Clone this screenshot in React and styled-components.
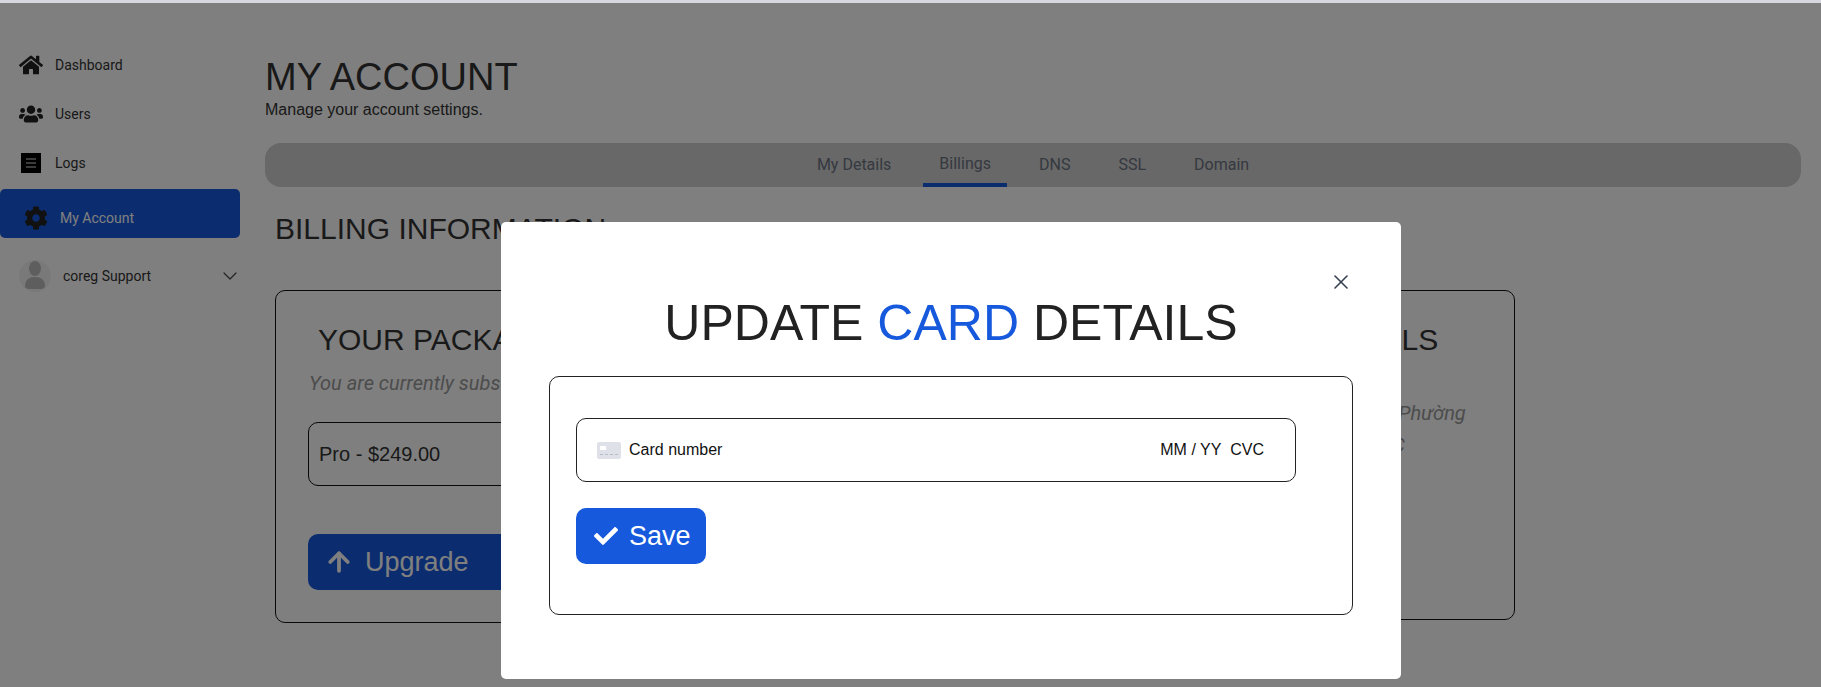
import React from 'react';
import styled, { createGlobalStyle } from 'styled-components';
import { FaHome, FaUsers, FaCog, FaCheck } from 'react-icons/fa';
import { FiArrowUp, FiChevronDown, FiX } from 'react-icons/fi';

const GlobalStyle = createGlobalStyle`
  html, body {
    margin: 0;
    padding: 0;
    background: #fff;
    font-family: "Liberation Sans", Arial, sans-serif;
  }
  * { box-sizing: border-box; }
`;

const Page = styled.div`
  position: relative;
  width: 1821px;
  height: 687px;
  overflow: hidden;
  display: flex;
  align-items: flex-start;
  border-top: 3px solid #d8d8e0;
`;

const Sidebar = styled.nav`
  width: 240px;
  flex-shrink: 0;
  padding-top: 37px;
  display: flex;
  flex-direction: column;
`;

const NavItem = styled.div`
  height: 49px;
  padding-left: 19px;
  display: flex;
  align-items: center;
  gap: 12px;
  font-family: Roboto, sans-serif;
  font-size: 14px;
  color: #333;
`;

const NavIcon = styled.span`
  width: 24px;
  display: flex;
  justify-content: center;
  color: #222;
  font-size: 24px;
`;

const LogsIcon = styled.span`
  width: 20px;
  height: 20px;
  background: #000;
  display: flex;
  flex-direction: column;
  align-items: center;
  justify-content: center;
  gap: 2px;
`;

const LogsLine = styled.i`
  width: 10px;
  height: 2px;
  background: #777;
`;

const ActiveItem = styled.div`
  height: 49px;
  margin-top: 2px;
  padding: 8px 0 0 24px;
  background: #1659dc;
  border-radius: 5px;
  display: flex;
  align-items: center;
  gap: 12px;
  font-family: Roboto, sans-serif;
  font-size: 14px;
  color: #fff;
`;

const Profile = styled.div`
  margin-top: 22px;
  padding-left: 19px;
  display: flex;
  align-items: center;
  gap: 12px;
  font-family: Roboto, sans-serif;
  font-size: 14px;
  color: #333;
`;

const ProfileName = styled.span`
  flex: 1;
`;

const ProfileChevron = styled.span`
  display: flex;
  margin-right: -2px;
  color: #444;
`;

const Main = styled.main`
  flex: 1;
  min-width: 0;
  padding: 52px 20px 0 25px;
`;

const PageTitle = styled.h1`
  margin: 0;
  font-size: 38px;
  font-weight: 400;
  line-height: 44px;
  color: #333;
`;

const PageSubtitle = styled.p`
  margin: 2px 0 0;
  font-size: 16px;
  line-height: 18px;
  color: #333;
`;

const TabBar = styled.div`
  margin-top: 24px;
  height: 44px;
  background: #d0d0d0;
  border-radius: 16px;
  display: flex;
  justify-content: center;
  gap: 16px;
`;

const Tab = styled.div`
  padding: 0 16px ${props => (props.$active ? '0' : '2px')};
  display: flex;
  align-items: center;
  font-family: Roboto, sans-serif;
  font-size: 16px;
  color: #6b7280;
  border-bottom: ${props => (props.$active ? '4px solid #1659dc' : 'none')};
`;

const SectionTitle = styled.h2`
  margin: 24px 0 0 10px;
  font-size: 30px;
  font-weight: 400;
  line-height: 36px;
  color: #333;
`;

const CardRow = styled.div`
  margin: 43px 0 0 10px;
  width: 1240px;
  display: flex;
  align-items: flex-start;
  gap: 20px;
`;

const Card = styled.section`
  flex: ${props => (props.$wide ? 1 : 'none')};
  width: ${props => (props.$wide ? 'auto' : '380px')};
  height: ${props => (props.$wide ? '333px' : '330px')};
  padding-top: 31px;
  border: 1px solid #111;
  border-radius: 10px;
`;

const CardTitle = styled.h3`
  margin: 0 0 0 ${props => (props.$right ? '56px' : '42px')};
  font-size: 30px;
  font-weight: 400;
  line-height: 36px;
  color: #333;
`;

const CardText = styled.p`
  margin: 8px 0 0 33px;
  font-family: Roboto, sans-serif;
  font-size: 20px;
  font-style: italic;
  line-height: 34px;
  color: #999;
`;

const AddressText = styled(CardText)`
  margin: 39px 0 0 94px;
  line-height: 32px;
`;

const PackageSelect = styled.div`
  margin: 22px 0 0 32px;
  width: 540px;
  height: 64px;
  padding-left: 10px;
  border: 1px solid #111;
  border-radius: 10px;
  display: flex;
  align-items: center;
  font-size: 20px;
  color: #333;
`;

const UpgradeButton = styled.button`
  width: 300px;
  height: 56px;
  margin: 48px 0 0 32px;
  padding: 0 0 0 16px;
  border: 0;
  border-radius: 10px;
  background: #1659dc;
  color: #fff;
  display: flex;
  align-items: center;
  gap: 11px;
  font-family: "Liberation Sans", Arial, sans-serif;
  font-size: 27px;
`;

const SaveButton = styled(UpgradeButton)`
  width: 130px;
  margin: 26px 0 0 26px;
  padding: 0 0 0 18px;
`;

const Overlay = styled.div`
  position: absolute;
  inset: 0;
  background: rgba(0, 0, 0, 0.5);
  padding: 219px 0 0 501px;
`;

const Modal = styled.div`
  position: relative;
  width: 900px;
  height: 457px;
  padding: 73px 48px 0;
  background: #fff;
  border-radius: 5px;
`;

const CloseButton = styled.span`
  position: absolute;
  top: 48px;
  right: 48px;
  display: flex;
  color: #374151;
`;

const ModalTitle = styled.h2`
  margin: 0;
  font-size: 50px;
  font-weight: 400;
  line-height: 56px;
  text-align: center;
  color: #222;
`;

const TitleAccent = styled.span`
  color: #1659dc;
`;

const FormBox = styled.div`
  margin-top: 25px;
  height: 239px;
  padding-top: 41px;
  border: 1px solid #222;
  border-radius: 10px;
`;

const CardInput = styled.div`
  margin-left: 26px;
  width: 720px;
  height: 64px;
  padding: 0 31px 0 20px;
  border: 1px solid #222;
  border-radius: 10px;
  display: flex;
  align-items: center;
  gap: 8px;
  font-size: 16px;
  color: #111;
`;

const CardPlaceholder = styled.span`
  flex: 1;
`;

const CardGlyph = () => (
  <svg width="24" height="17" viewBox="0 0 24 17">
    <rect width="24" height="17" rx="2" fill="#dfe1e8" />
    <rect x="3" y="4" width="6" height="4" fill="#fff" />
    <path d="M3 12.5h3M8 12.5h3M13 12.5h3M18 12.5h3" stroke="#b8bcc8" strokeWidth="1" />
  </svg>
);

const AvatarGlyph = () => (
  <svg width="32" height="32" viewBox="0 0 32 32">
    <circle cx="16" cy="16" r="16" fill="#f2f2f2" />
    <ellipse cx="16" cy="8.5" rx="6" ry="7.5" fill="#bcbcbc" />
    <path d="M6 26c0-6 4-9 10-9s10 3 10 9c0 2-2 3-4 3H10c-2 0-4-1-4-3z" fill="#bcbcbc" />
  </svg>
);

const SideNav = () => (
  <Sidebar>
    <NavItem><NavIcon><FaHome /></NavIcon>Dashboard</NavItem>
    <NavItem><NavIcon><FaUsers /></NavIcon>Users</NavItem>
    <NavItem>
      <NavIcon>
        <LogsIcon><LogsLine /><LogsLine /><LogsLine /></LogsIcon>
      </NavIcon>
      Logs
    </NavItem>
    <ActiveItem><NavIcon><FaCog /></NavIcon>My Account</ActiveItem>
    <Profile>
      <AvatarGlyph />
      <ProfileName>coreg Support</ProfileName>
      <ProfileChevron><FiChevronDown size={24} strokeWidth={1.2} /></ProfileChevron>
    </Profile>
  </Sidebar>
);

export default function App() {
  return (
    <Page>
      <GlobalStyle />
      <SideNav />
      <Main>
        <PageTitle>MY ACCOUNT</PageTitle>
        <PageSubtitle>Manage your account settings.</PageSubtitle>
        <TabBar>
          <Tab>My Details</Tab>
          <Tab $active>Billings</Tab>
          <Tab>DNS</Tab>
          <Tab>SSL</Tab>
          <Tab>Domain</Tab>
        </TabBar>
        <SectionTitle>BILLING INFORMATION</SectionTitle>
        <CardRow>
          <Card $wide>
            <CardTitle>YOUR PACKAGE</CardTitle>
            <CardText>You are currently subscribed to</CardText>
            <PackageSelect>Pro - $249.00</PackageSelect>
            <UpgradeButton>
              <FiArrowUp size={30} strokeWidth={3} />
              Upgrade
            </UpgradeButton>
          </Card>
          <Card>
            <CardTitle $right>BILLING DETAILS</CardTitle>
            <AddressText>
              Số 12 Nguyễn Huệ, Phường
              <br />
              Bến Nghé, Quận 1, C
            </AddressText>
          </Card>
        </CardRow>
      </Main>
      <Overlay>
        <Modal>
          <CloseButton><FiX size={24} strokeWidth={1.6} /></CloseButton>
          <ModalTitle>
            UPDATE <TitleAccent>CARD</TitleAccent> DETAILS
          </ModalTitle>
          <FormBox>
            <CardInput>
              <CardGlyph />
              <CardPlaceholder>Card number</CardPlaceholder>
              <span>MM / YY&nbsp;&nbsp;CVC</span>
            </CardInput>
            <SaveButton>
              <FaCheck size={24} />
              Save
            </SaveButton>
          </FormBox>
        </Modal>
      </Overlay>
    </Page>
  );
}
